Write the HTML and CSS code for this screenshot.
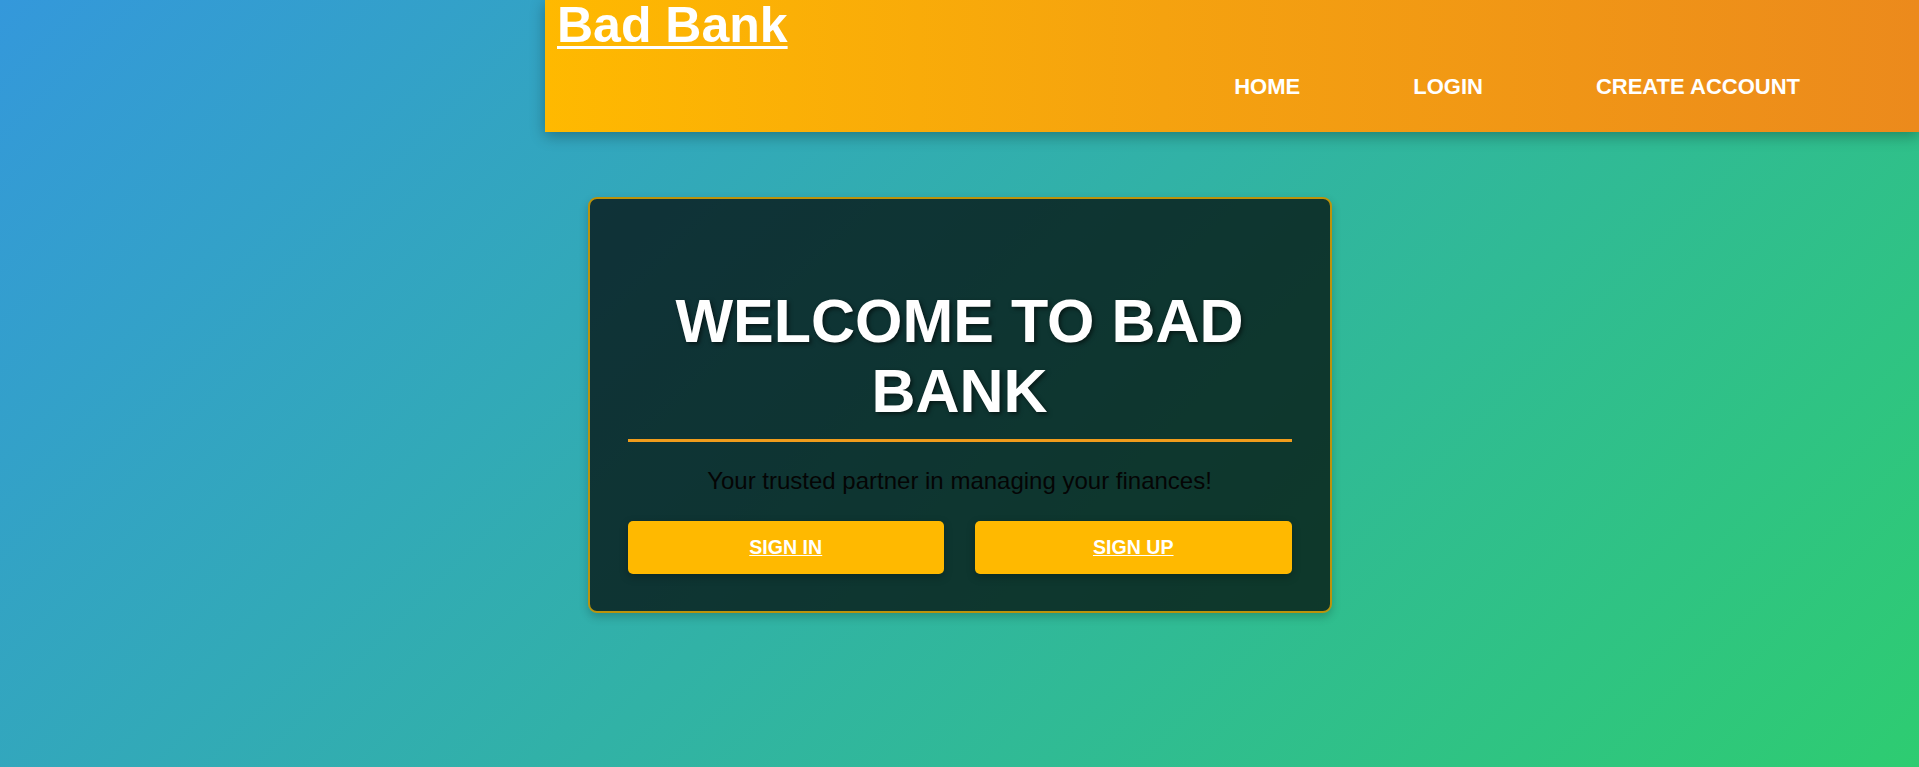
FILE: index.html
```html
<!DOCTYPE html>
<html lang="en">
<head>
<meta charset="utf-8">
<title>Bad Bank</title>
<link rel="stylesheet" href="styles.css">
</head>
<body>
  <header class="site-header">
    <a class="brand" href="#">Bad Bank</a>
    <nav class="nav">
      <a class="nav-link" href="#">HOME</a>
      <a class="nav-link" href="#">LOGIN</a>
      <a class="nav-link" href="#">CREATE ACCOUNT</a>
    </nav>
  </header>
  <main class="main">
    <section class="card">
      <h1 class="card-title">WELCOME TO BAD BANK</h1>
      <p class="card-text">Your trusted partner in managing your finances!</p>
      <div class="card-actions">
        <a class="btn" href="#">SIGN IN</a>
        <a class="btn" href="#">SIGN UP</a>
      </div>
    </section>
  </main>
</body>
</html>
```
FILE: styles.css
```css
* { box-sizing: border-box; }
html, body { margin: 0; padding: 0; }
body {
  min-height: 100vh;
  font-family: "Liberation Sans", Arial, sans-serif;
  background: linear-gradient(135deg, #3498db 0%, #2ecc71 100%);
  background-attachment: fixed;
  overflow: hidden;
}
.site-header {
  margin-left: 545px;
  height: 132px;
  padding-left: 12px;
  padding-right: 119px;
  display: flex;
  flex-direction: column;
  background: linear-gradient(90deg, #ffb900 0%, #f5a20f 45%, #ec8a1c 100%);
  box-shadow: 0 4px 14px rgba(0, 0, 0, 0.3);
}
.brand {
  align-self: flex-start;
  font-size: 50px;
  line-height: 1;
  font-weight: bold;
  color: #fff;
  text-decoration: underline;
  text-decoration-thickness: 3px;
  text-underline-offset: 4px;
}
.nav {
  margin-top: 24px;
  display: flex;
  justify-content: flex-end;
  gap: 113px;
}
.nav-link {
  font-size: 22px;
  font-weight: bold;
  color: #fff;
  text-decoration: none;
}
.main {
  display: flex;
  justify-content: center;
  padding-top: 65px;
}
.card {
  width: 744px;
  padding: 87px 38px 37px;
  border: 2px solid #bb930c;
  border-radius: 9px;
  background: rgba(0, 0, 0, 0.7);
  box-shadow: 0 4px 10px rgba(0, 0, 0, 0.2);
  text-align: center;
}
.card-title {
  margin: 0;
  padding-bottom: 13px;
  border-bottom: 3px solid #f09c1c;
  font-size: 61px;
  font-weight: bold;
  line-height: 70px;
  color: #fff;
  text-shadow: 2px 2px 4px rgba(0, 0, 0, 0.55);
}
.card-text {
  margin: 25px 0 0;
  font-size: 24px;
  line-height: 27.6px;
  color: #050505;
}
.card-actions {
  margin-top: 26px;
  display: flex;
  gap: 31px;
}
.btn {
  flex: 1;
  height: 53px;
  display: flex;
  align-items: center;
  justify-content: center;
  background: #ffb900;
  border-radius: 5px;
  box-shadow: 0 3px 8px rgba(0, 0, 0, 0.25);
  font-size: 19.6px;
  font-weight: bold;
  color: #fff;
  text-decoration: underline;
}
```
